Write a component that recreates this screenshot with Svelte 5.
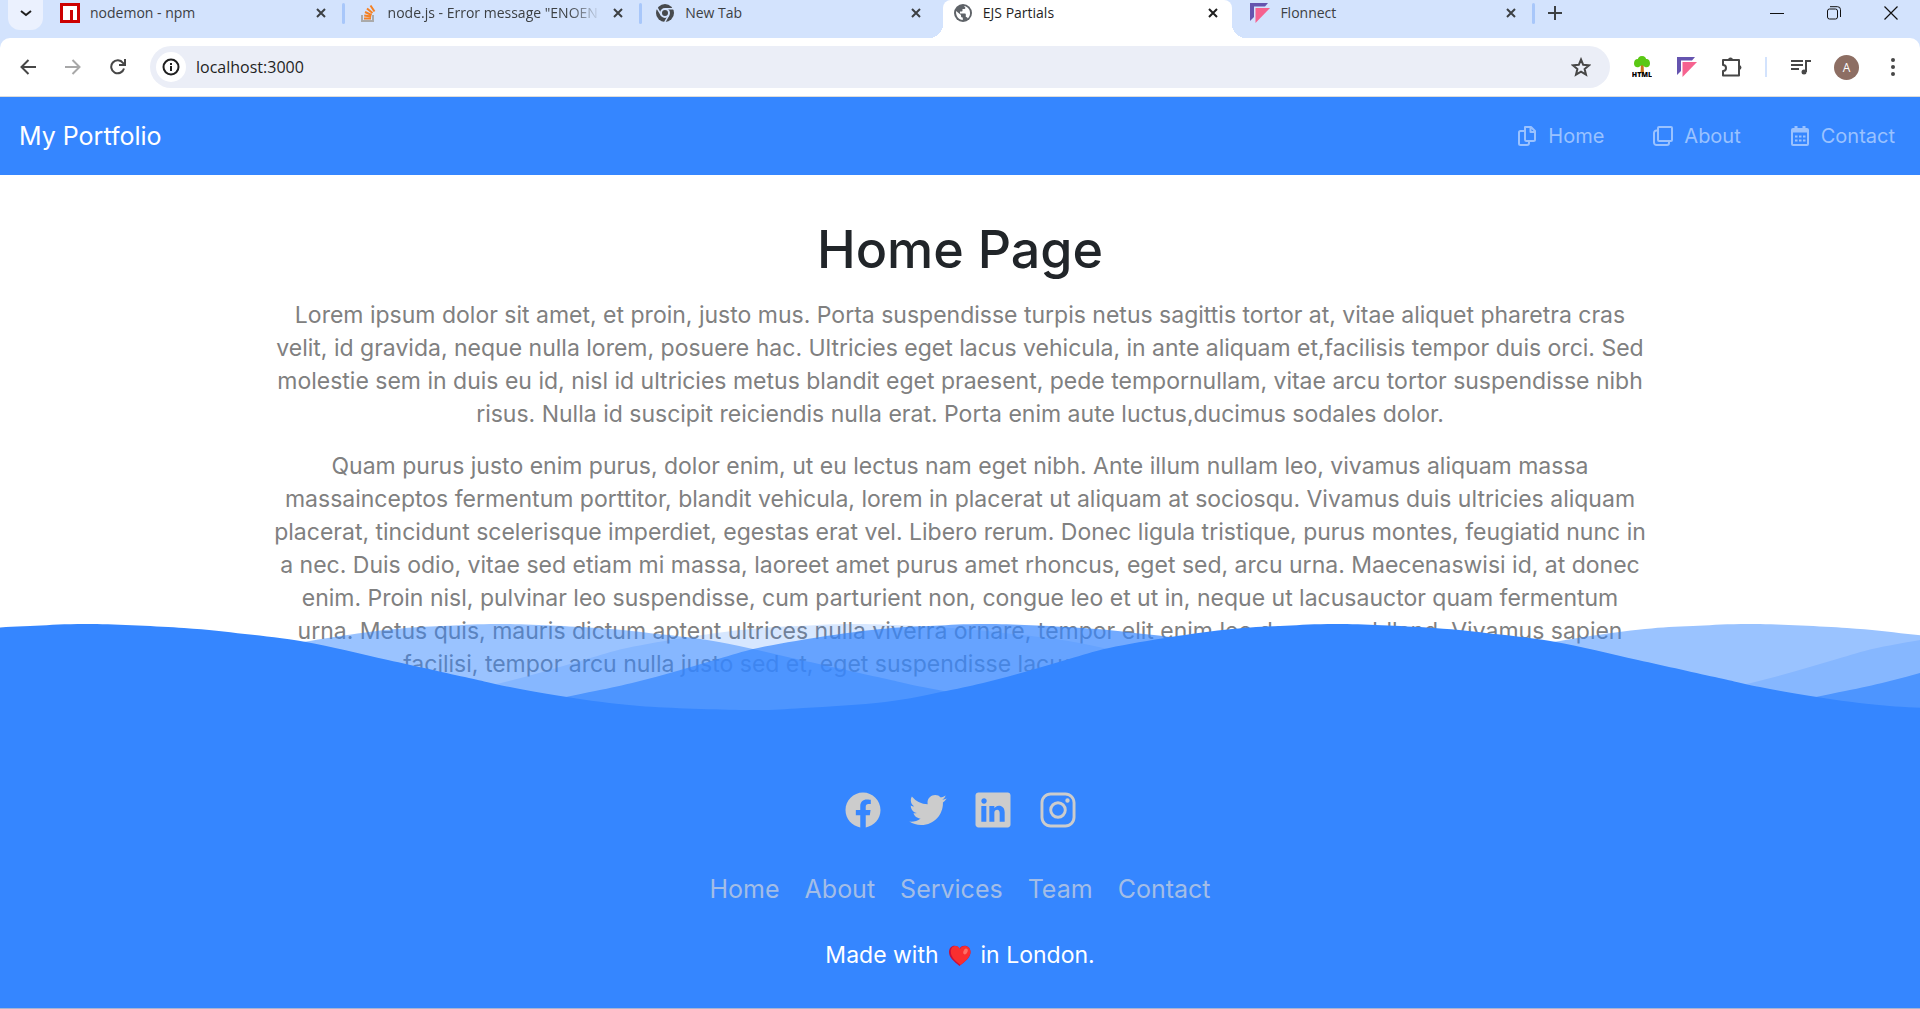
<script>
  const wave = [[0,0],[92,4],[153,10],[214,18],[296,36],[377,54],[418,63],[475,73],[548,82],[654,86],[711,84],[793,78],[854,67],[895,58],[936,47],[977,35],[1017,24],[1079,13],[1140,5],[1188,2],[1250,0]];
  const period = 1250;
  function smooth(pts) {
    const n = pts.length;
    const at = (i) => i < 0 ? [pts[n - 1 + i][0] - period, pts[n - 1 + i][1]] : i >= n ? [pts[i - n + 1][0] + period, pts[i - n + 1][1]] : pts[i];
    let d = `M${pts[0]}`;
    for (let i = 0; i < n - 1; i++) {
      const [a, b, c, e] = [at(i - 1), at(i), at(i + 1), at(i + 2)];
      d += `C${b[0] + (c[0] - a[0]) / 6} ${b[1] + (c[1] - a[1]) / 6} ${c[0] - (e[0] - b[0]) / 6} ${c[1] - (e[1] - b[1]) / 6} ${c}`;
    }
    return d + `V125H0Z`;
  }
  const wavePath = smooth(wave);
  const layers = [
    { id: 'wave-c', x: 860, o: 0.2 },
    { id: 'wave-a', x: 505, o: 0.5 },
    { id: 'wave-b', x: 991, o: 0.7 },
    { id: 'wave-top', x: 92, o: 1 }
  ];
  const tabs = [
    { title: 'nodemon - npm', icon: 'npm', rule: true },
    { title: 'node.js - Error message "ENOEN', icon: 'so', fade: true, rule: true },
    { title: 'New Tab', icon: 'chrome' },
    { title: 'EJS Partials', icon: 'globe', active: true },
    { title: 'Flonnect', icon: 'flonnect', rule: true }
  ];
  const first = [
    'Lorem ipsum dolor sit amet, et proin, justo mus. Porta suspendisse turpis netus sagittis tortor at, vitae aliquet pharetra cras',
    'velit, id gravida, neque nulla lorem, posuere hac. Ultricies eget lacus vehicula, in ante aliquam et,facilisis tempor duis orci. Sed',
    'molestie sem in duis eu id, nisl id ultricies metus blandit eget praesent, pede tempornullam, vitae arcu tortor suspendisse nibh',
    'risus. Nulla id suscipit reiciendis nulla erat. Porta enim aute luctus,ducimus sodales dolor.'
  ];
  const second = [
    'Quam purus justo enim purus, dolor enim, ut eu lectus nam eget nibh. Ante illum nullam leo, vivamus aliquam massa',
    'massainceptos fermentum porttitor, blandit vehicula, lorem in placerat ut aliquam at sociosqu. Vivamus duis ultricies aliquam',
    'placerat, tincidunt scelerisque imperdiet, egestas erat vel. Libero rerum. Donec ligula tristique, purus montes, feugiatid nunc in',
    'a nec. Duis odio, vitae sed etiam mi massa, laoreet amet purus amet rhoncus, eget sed, arcu urna. Maecenaswisi id, at donec',
    'enim. Proin nisl, pulvinar leo suspendisse, cum parturient non, congue leo et ut in, neque ut lacusauctor quam fermentum',
    'urna. Metus quis, mauris dictum aptent ultrices nulla viverra ornare, tempor elit enim leo donec, ac blland. Vivamus sapien',
    'facilisi, tempor arcu nulla justo sed et, eget suspendisse lacus. Ut fermentum, ultricies nulla dolor cras.'
  ];
</script>

{#snippet favicon(name)}
  {#if name === 'npm'}
    <svg class="fav" viewBox="0 0 20 20"><path fill="#c00" d="M0 0h20v20H0z" /><path fill="#fff" d="M3 3h14v14h-4V7h-3v10H3z" /></svg>
  {:else if name === 'so'}
    <svg class="fav" viewBox="0 0 20 20" fill="none"><path stroke="#aaa" stroke-width="2" d="M4 12v6h11v-6" /><path stroke="#f48024" stroke-width="2" d="M6 15.500h7M6.200 12.500l7 1M7 9l6.600 3M9 5.500l5.500 4.600M12.500 2.500l4 6" /></svg>
  {:else if name === 'chrome'}
    <svg class="fav" viewBox="0 0 20 20"><circle cx="10" cy="10" r="9" fill="#474a4d" /><circle cx="10" cy="10" r="4" fill="#474a4d" stroke="#d3e3fd" stroke-width="2" /><path stroke="#d3e3fd" stroke-width="1.500" fill="none" d="M10 5.700h9M6.300 12.200L1.800 4.500M13.700 12.200L9.300 20" /></svg>
  {:else if name === 'globe'}
    <svg class="fav" viewBox="0 0 20 20"><circle cx="10" cy="10" r="9" fill="#5f6368" /><path fill="#fff" d="M3 8l5 4v1c0 1 .8 1.600 1.800 1.600V17C5.800 17 2.800 13.500 3 8zM11 3.100c4 .6 6.400 4 6 7.900-.3 2-1 3.400-2.200 4.500-.4-1-1-1.500-2-1.500v-2.500c0-.7-.5-1-1-1H7V8.500h1.500c.7 0 1-.4 1-1V6H11c.8 0 1.400-.5 1.400-1.300z" /></svg>
  {:else}
    <svg class="fav" viewBox="0 0 20 20"><path fill="#6554af" d="M0 0h18l-3 3.500H4V14l-4 4z" /><path fill="#f6628f" d="M5.500 5H20L5.500 20z" /></svg>
  {/if}
{/snippet}

<div class="page">
  <div class="tabstrip">
    <button class="search-tabs" aria-label="Search tabs"><svg width="12" height="12" viewBox="0 0 12 12"><path d="M1 4l5 4 5-4" fill="none" stroke="#1f1f1f" stroke-width="2" /></svg></button>
    <div class="tabs">
      {#each tabs as tab}
        <div class="tab" class:active={tab.active} class:ruled={tab.rule}>
          {@render favicon(tab.icon)}
          <span class="title" class:fade={tab.fade}>{tab.title}</span>
          <button class="close" aria-label="Close tab"><svg width="12" height="12" viewBox="0 0 12 12"><path d="M2 2l8 8M10 2l-8 8" fill="none" stroke="currentColor" stroke-width="2" /></svg></button>
        </div>
      {/each}
    </div>
    <button class="plain new" aria-label="New tab"><svg width="14" height="14" viewBox="0 0 14 14"><path d="M7 0v14M0 7h14" stroke="#3c4043" stroke-width="2" /></svg></button>
    <div class="window">
      <button class="plain" aria-label="Minimize"><svg width="14" height="14" viewBox="0 0 14 14"><path d="M0 7.500h14" stroke="#111" stroke-width="1" /></svg></button>
      <button class="plain" aria-label="Restore"><svg width="14" height="14" viewBox="0 0 14 14" fill="none" stroke="#111"><rect x=".5" y="3" width="10" height="10" rx="2" /><path d="M3 .7h7.500a3 3 0 013 3V11" /></svg></button>
      <button class="plain" aria-label="Close window"><svg width="14" height="14" viewBox="0 0 14 14"><path d="M.5.5l13 13M13.500.5l-13 13" stroke="#111" stroke-width="1.200" /></svg></button>
    </div>
  </div>

  <div class="under">
    <div class="toolbar">
      <div class="moves">
        <button class="plain" aria-label="Back"><svg width="16" height="16" viewBox="0 0 16 16" fill="none" stroke="#474747" stroke-width="2"><path d="M16 8H2M8.500 1L1.500 8l7 7" /></svg></button>
        <button class="plain" aria-label="Forward"><svg width="16" height="16" viewBox="0 0 16 16" fill="none" stroke="#a8a8a8" stroke-width="2"><path d="M0 8h14M7.500 1l7 7-7 7" /></svg></button>
        <button class="plain" aria-label="Reload"><svg width="16" height="16" viewBox="0 0 16 16" fill="none" stroke="#474747" stroke-width="2"><path d="M14 9.500A6.500 6.500 0 1113 4l1.500 1.800M15 0v6H9" /></svg></button>
      </div>
      <div class="address">
        <button class="info" aria-label="Site information"><svg width="18" height="18" viewBox="0 0 18 18" fill="none" stroke="#1f1f1f" stroke-width="2"><circle cx="9" cy="9" r="7.500" /><path d="M9 8v5M9 5v2" /></svg></button>
        <input aria-label="Address" value="localhost:3000" />
        <button class="plain" aria-label="Bookmark this tab"><svg width="20" height="20" viewBox="0 0 20 20" fill="none" stroke="#474747" stroke-width="2"><path d="M10 2.500l2.200 5.300 5.800.5-4.400 3.700 1.400 5.600-5-3-5 3L6.400 12 2 8.300l5.800-.5z" /></svg></button>
      </div>
      <div class="ext">
        <button class="plain" aria-label="HTML Tree"><svg width="20" height="22" viewBox="0 0 20 22"><path d="M9 8h2.500l.5 9H8.500z" fill="#c8741c" /><path d="M10 0c3 0 4 2 4 3 3 0 4 2 4 4.500S16 12 13 11l-3-2-3 2c-3 1-5-1-5-3.500S3 3 6 3c0-1 1-3 4-3z" fill="#5ac814" /><text x="10" y="21" text-anchor="middle" font-size="7" font-weight="800">HTML</text></svg></button>
        <button class="plain" aria-label="Flonnect">{@render favicon('flonnect')}</button>
        <button class="plain" aria-label="Extensions"><svg width="22" height="22" viewBox="0 0 22 22" fill="none" stroke="#474747" stroke-width="2"><path d="M2 4h16v15.500H2v-4.500c4 0 4-6 0-6z" stroke-linejoin="round" /><path fill="#474747" stroke="none" d="M7 4a2.500 2.500 0 015 0zM18 9a2.500 2.500 0 010 5z" /></svg></button>
        <span class="rule"></span>
        <button class="plain" aria-label="Media controls"><svg width="20" height="18" viewBox="0 0 20 18" fill="none" stroke="#474747" stroke-width="2"><path d="M0 3h12M0 7h12M0 11h8M15 14V3h5" /><circle cx="13" cy="14" r="2.500" fill="#474747" stroke="none" /></svg></button>
        <button class="avatar">A</button>
        <button class="plain" aria-label="Menu"><svg width="6" height="18" viewBox="0 0 6 18" fill="#474747"><circle cx="3" cy="2" r="2" /><circle cx="3" cy="9" r="2" /><circle cx="3" cy="16" r="2" /></svg></button>
      </div>
    </div>
  </div>

  <nav class="navbar">
    <a class="brand" href="/">My Portfolio</a>
    <div class="links">
      <a href="/"><svg width="20" height="20" viewBox="0 0 20 20" fill="none" stroke="currentColor" stroke-width="2" stroke-linejoin="round"><path d="M8 1h6l4 4v8.500a1.500 1.500 0 01-1.500 1.500H9.500A1.500 1.500 0 018 13.500zM13.500 1v5H18" /><path d="M8 5H3.500A1.500 1.500 0 002 6.500v11A1.500 1.500 0 003.500 19H10a2 2 0 002-2v-2" /></svg>Home</a>
      <a href="/about"><svg width="20" height="20" viewBox="0 0 20 20" fill="none" stroke="currentColor" stroke-width="2" stroke-linejoin="round"><rect x="5" y="1" width="14" height="14" rx="1" /><path d="M5 4.500H3.500A2.500 2.500 0 001 7v9.500A2.500 2.500 0 003.500 19H14a2 2 0 002-2v-2" /></svg>About</a>
      <a href="/contact"><svg width="20" height="20" viewBox="0 0 20 20" fill="none" stroke="currentColor" stroke-width="2"><rect x="2" y="3" width="16" height="16" rx="1" /><path d="M2 5h16M6 0v4M14 0v4" stroke-width="3" /><path d="M5 10.500h2.500M9 10.500h2.500M13 10.500h2.500M5 14.500h2.500M9 14.500h2.500M13 14.500h2.500" /></svg>Contact</a>
    </div>
  </nav>

  <main>
    <h1>Home Page</h1>
    <p>{#each first as line}<span>{line}</span>{/each}</p>
    <p>{#each second as line}<span>{line}</span>{/each}</p>
  </main>

  <footer>
    <svg class="waves" aria-hidden="true">
      <defs>
        {#each layers as l}
          <pattern id={l.id} patternUnits="userSpaceOnUse" x={l.x} y="0" width="1250" height="125"><path d={wavePath} fill="#3586ff" /></pattern>
        {/each}
      </defs>
      {#each layers as l}<rect width="100%" height="125" fill="url(#{l.id})" opacity={l.o} />{/each}
    </svg>
    <div class="foot">
      <div class="social">
        <a href="/facebook" aria-label="Facebook"><svg viewBox="0 0 512 512"><path d="M480 257.350c0-123.700-100.300-224-224-224s-224 100.300-224 224c0 111.800 81.900 204.470 189 221.290V322.120h-56.890v-64.770H221V208c0-56.130 33.450-87.160 84.610-87.160 24.510 0 50.150 4.380 50.150 4.380v55.130H327.500c-27.810 0-36.510 17.260-36.510 35v42h62.120l-9.920 64.770H291v156.540c107.100-16.810 189-109.480 189-221.310z" /></svg></a>
        <a href="/twitter" aria-label="Twitter"><svg viewBox="0 0 512 512"><path d="M496 109.500a201.800 201.800 0 01-56.550 15.300 97.510 97.510 0 0043.330-53.600 197.740 197.740 0 01-62.560 23.500A99.140 99.140 0 00348.310 64c-54.420 0-98.460 43.400-98.460 96.900a93.210 93.210 0 002.540 22.100 280.700 280.700 0 01-203-101.300A95.690 95.690 0 0036 130.400c0 33.600 17.530 63.300 44 80.700A97.500 97.500 0 0135.220 199v1.200c0 47 34 86.100 79 95a100.760 100.760 0 01-25.940 3.400 94.380 94.380 0 01-18.510-1.800c12.510 38.500 48.920 66.500 92.050 67.300A199.590 199.590 0 0139.500 405.600a203 203 0 01-23.500-1.400A278.680 278.680 0 00166.740 448c181.360 0 280.440-147.700 280.440-275.800 0-4.200-.11-8.400-.31-12.500A198.480 198.480 0 00496 109.500z" /></svg></a>
        <a href="/linkedin" aria-label="LinkedIn"><svg viewBox="0 0 512 512"><path d="M444.170 32H70.280C49.850 32 32 46.700 32 66.890v374.720C32 461.910 49.850 480 70.280 480h373.780c20.540 0 35.940-18.210 35.940-38.390V66.890C480.120 46.700 464.600 32 444.170 32zm-273.300 373.430h-64.180V205.880h64.180zM141 175.540h-.46c-20.540 0-33.840-15.290-33.840-34.430 0-19.490 13.650-34.420 34.650-34.420s33.850 14.820 34.310 34.420c-.01 19.140-13.310 34.430-34.660 34.430zm264.430 229.890h-64.180V296.320c0-26.140-9.340-44-32.560-44-17.740 0-28.240 12-32.910 23.690-1.750 4.200-2.220 9.920-2.220 15.760v113.660h-64.180V205.880h64.180v27.770c9.340-13.300 23.930-32.440 57.880-32.440 42.130 0 74 27.770 74 87.640z" /></svg></a>
        <a href="/instagram" aria-label="Instagram"><svg viewBox="0 0 512 512"><path d="M349.330 69.330a93.620 93.620 0 0193.340 93.340v186.660a93.620 93.620 0 01-93.340 93.340H162.670a93.620 93.620 0 01-93.340-93.340V162.670a93.620 93.620 0 0193.340-93.340h186.660m0-37.330H162.670C90.800 32 32 90.800 32 162.670v186.660C32 421.200 90.800 480 162.670 480h186.660C421.200 480 480 421.200 480 349.330V162.670C480 90.800 421.200 32 349.330 32z" /><path d="M377.330 162.670a28 28 0 1128-28 27.940 27.940 0 01-28 28zM256 181.330A74.670 74.670 0 11181.330 256 74.750 74.750 0 01256 181.330m0-37.330a112 112 0 10112 112 112 112 0 00-112-112z" /></svg></a>
      </div>
      <div class="menu">
        <a href="/">Home</a><a href="/about">About</a><a href="/services">Services</a><a href="/team">Team</a><a href="/contact">Contact</a>
      </div>
      <div class="made">Made with <svg width="22" height="22" viewBox="0 0 22 22" role="img" aria-label="love"><path fill="#c90f3c" d="M10.500 21C5 16.500 0 12.500 0 7 0 3 2.500.7 5.500.7c2.300 0 4 1 5 3 1-2 2.700-3 5-3 3.200 0 6 2.300 6 6.300 0 5.500-5.500 9.500-11 14z" /><path fill="#f92f2f" d="M11.500 20C6.500 16 1.800 12 1.800 7c0-3.800 2-5.900 4.500-5.900 2.200 0 3.700 1 4.700 3 1-2 2.500-3 4.700-3 3 0 5.800 2.200 5.800 5.900 0 5-5 9-10 13z" /><ellipse cx="16.500" cy="6.500" rx="2" ry="3" fill="#fd7066" transform="rotate(25 16.500 6.500)" /></svg> in London.</div>
    </div>
  </footer>
</div>

<style>
  :global(body) { margin: 0; background: #fff; }
  .page { min-height: 100vh; display: flex; flex-direction: column; overflow: hidden; font-family: Inter, "Open Sans", sans-serif; }
  button { border: 0; padding: 0; background: none; font: inherit; cursor: pointer; }
  a { text-decoration: none; color: inherit; }
  .plain { display: flex; align-items: center; justify-content: center; }
  svg { display: block; flex: none; }
  .tabstrip { display: flex; height: 38px; background: #d3e3fd; font: 14px/20px "Open Sans", sans-serif; color: #3c4043; }
  .search-tabs { width: 35px; height: 30px; margin-left: 8px; border-radius: 0 0 12px 12px; background: #ebf1fe; display: grid; place-items: center; padding-bottom: 4px; }
  .tabs { display: flex; margin-left: 3px; flex: 0 1 1488px; min-width: 0; }
  .tab { position: relative; flex: 1; min-width: 0; display: flex; align-items: flex-start; gap: 10px; padding: 3px 16px 0 14px; }
  .ruled::after { content: ""; position: absolute; right: -1px; top: 3px; width: 3px; height: 21px; border-radius: 2px; background: #a8c7fa; }
  .fav { width: 20px; height: 20px; }
  .title { flex: 1; overflow: hidden; white-space: nowrap; }
  .fade { mask-image: linear-gradient(to right, #000 85%, transparent); }
  .close { color: #3c4043; width: 14px; height: 20px; display: grid; place-items: center; }
  .active { background: #fff; color: #1f1f1f; border-radius: 8px 8px 0 0; margin: 0 4px; padding: 3px 12px 0 10px; }
  .active .close { color: #1f1f1f; }
  .active::before, .active::after { content: ""; position: absolute; bottom: 0; width: 14px; height: 14px; }
  .active::before { left: -14px; background: radial-gradient(circle at 0 0, transparent 14px, #fff 14px); }
  .active::after { right: -14px; background: radial-gradient(circle at 100% 0, transparent 14px, #fff 14px); }
  .new { margin-left: 14px; }
  .window { display: flex; gap: 43px; margin-left: auto; padding-right: 22px; }
  .tabstrip > .plain, .window .plain { height: 26px; }
  .under { background: #d3e3fd; }
  .toolbar { height: 58px; display: flex; align-items: center; gap: 20px; padding: 0 16px 0 20px; background: #fff; border-radius: 10px 10px 0 0; border-bottom: 1px solid #dcdcdc; font-family: "Open Sans", sans-serif; }
  .moves { display: flex; gap: 29px; padding-right: 4px; }
  .address { flex: 1; display: flex; align-items: center; height: 42px; border-radius: 21px; background: #ebeef7; padding: 0 19px 0 6px; }
  .info { width: 30px; height: 30px; border-radius: 50%; background: #fff; display: grid; place-items: center; }
  input { flex: 1; min-width: 0; border: 0; background: none; outline: none; padding: 0 10px; font: 16px/24px "Open Sans", sans-serif; color: #1f1f1f; }
  .ext { display: flex; align-items: center; gap: 22px; }
  .ext .plain { width: 23px; }
  .rule { width: 2px; height: 20px; background: #d3e3fd; }
  .avatar { width: 25px; height: 25px; border-radius: 50%; background: #8d6e63; color: #fff; font-size: 12px; }
  .navbar { height: 78px; background: #3586ff; display: flex; align-items: center; justify-content: space-between; padding: 0 25px 0 19px; color: #fff; }
  .brand { font-size: 25px; }
  .links { display: flex; gap: 49px; font-size: 20px; color: #9ac2ff; }
  .links a { display: flex; align-items: center; gap: 11px; }
  main { padding-top: 45px; text-align: center; color: #808080; font-size: 23px; line-height: 33px; }
  h1 { margin: 0 0 19px; font-size: 52px; line-height: 60px; font-weight: 500; color: #212529; }
  p { margin: 0 0 19px; }
  p span { display: block; white-space: nowrap; }
  footer { position: relative; margin-top: -76px; flex: 1; display: flex; flex-direction: column; }
  .waves { width: 100%; height: 125px; }
  .foot { flex: 1; background: #3586ff; display: flex; flex-direction: column; align-items: center; padding-top: 41px; border-bottom: 1px solid #a9b4d0; }
  .social { display: flex; gap: 25px; }
  .social svg { width: 40px; height: 40px; fill: #ccc; }
  .menu { display: flex; gap: 25px; font-size: 25px; line-height: 36px; color: #a3bde6; margin-top: 41px; }
  .made { display: flex; gap: 10px; align-items: center; color: #fff; font-size: 23px; line-height: 33px; margin-top: 32px; }
</style>
